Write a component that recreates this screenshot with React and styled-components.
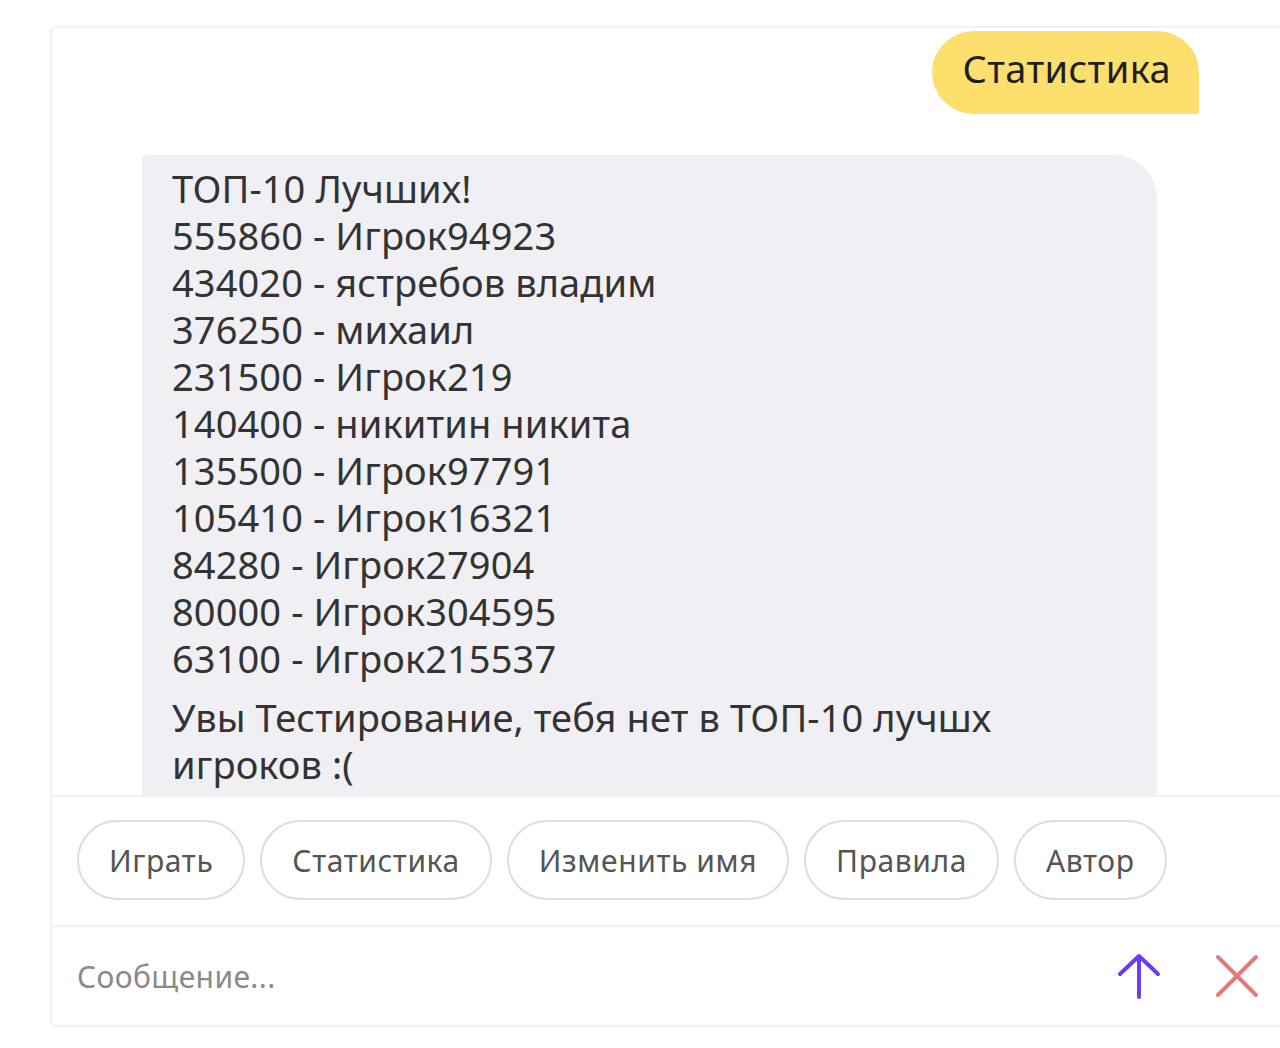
import React from "react";
import styled, { createGlobalStyle } from "styled-components";

const GlobalStyle = createGlobalStyle`
  html, body {
    margin: 0;
    padding: 0;
    background: #ffffff;
    overflow: hidden;
  }
  body {
    font-family: "Noto Sans", "Open Sans", sans-serif;
  }
`;

const top = [
  "555860 - Игрок94923",
  "434020 - ястребов владим",
  "376250 - михаил",
  "231500 - Игрок219",
  "140400 - никитин никита",
  "135500 - Игрок97791",
  "105410 - Игрок16321",
  "84280 - Игрок27904",
  "80000 - Игрок304595",
  "63100 - Игрок215537",
];

const suggests = ["Играть", "Статистика", "Изменить имя", "Правила", "Автор"];

function App() {
  return (
    <>
      <GlobalStyle />
      <Panel>
        <Messages>
          <UserBubble>Статистика</UserBubble>
          <BotBubble>
            <Para>
              ТОП-10 Лучших!
              {top.map((row) => (
                <React.Fragment key={row}>
                  <br />
                  {row}
                </React.Fragment>
              ))}
            </Para>
            <Para>
              Увы Тестирование, тебя нет в ТОП-10 лучшх
              <br />
              игроков :(
            </Para>
          </BotBubble>
        </Messages>
        <Suggests>
          {suggests.map((s) => (
            <Chip key={s}>{s}</Chip>
          ))}
        </Suggests>
        <InputRow>
          <Placeholder>Сообщение...</Placeholder>
          <IconButton>
            <svg width="46" height="48" viewBox="0 0 46 48" fill="none">
              <path
                d="M23 45V5M4 22L23 4L42 22"
                stroke="#6a3cf4"
                strokeWidth="4"
                strokeLinecap="round"
                strokeLinejoin="round"
              />
            </svg>
          </IconButton>
          <IconButton>
            <svg width="46" height="46" viewBox="0 0 46 46" fill="none">
              <path
                d="M4 4L42 42M42 4L4 42"
                stroke="#e57a7a"
                strokeWidth="4"
                strokeLinecap="round"
              />
            </svg>
          </IconButton>
        </InputRow>
      </Panel>
    </>
  );
}

export default App;

const Panel = styled.div`
  margin: 26px 0 0 50px;
  width: 1250px;
  height: 1001px;
  box-sizing: border-box;
  border: 2px solid #f2f2f4;
  border-radius: 6px;
  display: flex;
  flex-direction: column;
  overflow: hidden;
`;

const Messages = styled.div`
  height: 764px;
  flex-shrink: 0;
  overflow: hidden;
  display: flex;
  flex-direction: column;
  padding: 3px 0 0 90px;
  width: 1057px;
  box-sizing: content-box;
`;

const UserBubble = styled.div`
  flex-shrink: 0;
  align-self: flex-end;
  background: #fddf6e;
  color: #1f1f1f;
  font-size: 38px;
  line-height: 74px;
  height: 83px;
  box-sizing: border-box;
  padding: 0 28px 0 30px;
  border-radius: 42px 42px 0 42px;
  letter-spacing: 0.4px;
`;

const BotBubble = styled.div`
  flex-shrink: 0;
  margin-top: 41px;
  width: 1015px;
  box-sizing: border-box;
  background: #f0f0f4;
  border-radius: 6px 44px 44px 44px;
  padding: 10px 30px 40px;
  color: #333;
  font-size: 38px;
  line-height: 47px;
  letter-spacing: 0.1px;
`;

const Para = styled.p`
  margin: 0 0 12px;
`;

const Suggests = styled.div`
  border-top: 2px solid #f2f2f4;
  border-bottom: 2px solid #f2f2f4;
  height: 132px;
  flex-shrink: 0;
  box-sizing: border-box;
  display: flex;
  align-items: center;
  gap: 15px;
  padding: 0 25px 2px;
`;

const Chip = styled.div`
  height: 80px;
  box-sizing: border-box;
  border: 2px solid #dedede;
  border-radius: 40px;
  padding: 0 30px;
  display: flex;
  align-items: center;
  font-size: 30px;
  letter-spacing: 0.6px;
  color: #555;
`;

const InputRow = styled.div`
  flex: 1;
  display: flex;
  align-items: center;
  padding: 0 38px 0 25px;
`;

const Placeholder = styled.div`
  flex: 1;
  font-size: 30px;
  letter-spacing: 0.4px;
  color: #8a8a8a;
`;

const IconButton = styled.div`
  width: 46px;
  height: 48px;
  display: flex;
  align-items: center;
  justify-content: center;
  & + & {
    margin-left: 52px;
  }
`;
